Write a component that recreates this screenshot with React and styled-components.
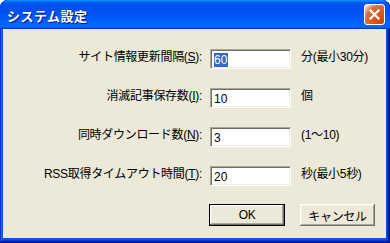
import React from "react";
import styled, { createGlobalStyle } from "styled-components";

const GlobalStyle = createGlobalStyle`
  html, body {
    margin: 0;
    padding: 0;
    background: #ffffff;
  }
  body {
    font-family: "Liberation Sans", "Noto Sans CJK JP", sans-serif;
  }
`;

const Window = styled.div`
  width: 390px;
  height: 243px;
  display: flex;
  flex-direction: column;
  box-sizing: border-box;
  border-radius: 8px 8px 0 0;
  overflow: hidden;
  background: #0055ea;
  box-shadow: inset -1px -1px #00138c, inset 1px 1px #0831d9,
    inset -2px -2px #001ea0, inset 2px 2px #166aee,
    inset -3px -3px #003bda, inset 3px 3px #0855dd;
`;

const TitleBar = styled.div`
  height: 29px;
  flex: none;
  display: flex;
  align-items: center;
  justify-content: space-between;
  padding: 0 5px 0 7px;
  background: linear-gradient(
    180deg,
    #0997ff,
    #0053ee 10%,
    #0050ee 40%,
    #0066ff 86%,
    #0066ff 92%,
    #005bff 95%,
    #003dd7 97%,
    #003dd7
  );
  border-radius: 8px 8px 0 0;
`;

const Title = styled.span`
  color: #ffffff;
  font-family: "Noto Sans CJK JP", sans-serif;
  font-weight: 700;
  font-size: 13px;
  letter-spacing: 0.5px;
  text-shadow: 1px 1px #0f1089;
  margin-top: 1px;
`;

const CloseButton = styled.div`
  width: 19px;
  height: 19px;
  border: 1px solid #ffffff;
  border-radius: 3px;
  display: flex;
  align-items: center;
  justify-content: center;
  background: radial-gradient(
    circle at 90% 90%,
    #cc4600 0%,
    #dc6527 55%,
    #cd7546 70%,
    #ffccb2 90%,
    #ffffff 100%
  );
`;

const Body = styled.div`
  flex: 1;
  margin: 0 4px 5px 3px;
  background: #ece9d8;
`;

const Form = styled.div`
  display: grid;
  grid-template-columns: 199px 81px auto;
  grid-auto-rows: 20px;
  column-gap: 8px;
  row-gap: 19px;
  padding-top: 20px;
`;

const Label = styled.label`
  justify-self: end;
  align-self: start;
  line-height: 16px;
  font-size: 12px;
  color: #000000;
  white-space: nowrap;
  letter-spacing: -0.3px;
`;

const Key = styled.span`
  text-decoration: underline;
`;

const Field = styled.input`
  box-sizing: border-box;
  width: 81px;
  height: 20px;
  margin: 0;
  padding: 2px 3px 0;
  font-family: "Liberation Sans", sans-serif;
  font-size: 12px;
  color: #000000;
  background: #ffffff;
  border: 1px solid;
  border-color: #aca899 #ffffff #ffffff #aca899;
  box-shadow: inset 1px 1px #716f64, inset -1px -1px #f1efe2;
  outline: none;
  &::selection {
    background: #316ac5;
    color: #ffffff;
  }
`;

const Selected = styled.div`
  box-sizing: border-box;
  width: 81px;
  height: 20px;
  padding: 3px 3px 0;
  font-size: 12px;
  line-height: 14px;
  background: #ffffff;
  border: 1px solid;
  border-color: #aca899 #ffffff #ffffff #aca899;
  box-shadow: inset 1px 1px #716f64, inset -1px -1px #f1efe2;
`;

const Highlight = styled.span`
  background: #316ac5;
  color: #ffffff;
  padding-right: 1px;
`;

const Unit = styled.span`
  align-self: start;
  line-height: 16px;
  font-size: 12px;
  color: #000000;
  padding-left: 2px;
  white-space: nowrap;
  letter-spacing: -0.3px;
`;

const ButtonRow = styled.div`
  grid-column: 2 / 4;
  display: flex;
  gap: 15px;
  margin-left: -1px;
  margin-top: -1px;
`;

const Button = styled.button`
  box-sizing: border-box;
  width: ${(p) => p.$width}px;
  height: 22px;
  margin: 0;
  padding: 0;
  font-family: "Liberation Sans", "Noto Sans CJK JP", sans-serif;
  font-size: 12px;
  color: #000000;
  background: #ece9d8;
  border: ${(p) => (p.$primary ? "1px solid #000000" : "none")};
  box-shadow: inset -1px -1px #716f64, inset 1px 1px #ffffff,
    inset -2px -2px #aca899, inset 2px 2px #f1efe2;
  letter-spacing: -0.3px;
`;

const rows = [
  { label: "サイト情報更新間隔", key: "S", value: "60", unit: "分(最小30分)", selected: true },
  { label: "消滅記事保存数", key: "I", value: "10", unit: "個" },
  { label: "同時ダウンロード数", key: "N", value: "3", unit: "(1～10)" },
  { label: "RSS取得タイムアウト時間", key: "T", value: "20", unit: "秒(最小5秒)" },
];

export default function App() {
  return (
    <>
      <GlobalStyle />
      <Window>
        <TitleBar>
          <Title>システム設定</Title>
          <CloseButton>
            <svg width="11" height="11" viewBox="0 0 11 11">
              <path d="M1.5 1.5 L9.5 9.5 M9.5 1.5 L1.5 9.5" stroke="#ffffff" strokeWidth="2.2" strokeLinecap="square" />
            </svg>
          </CloseButton>
        </TitleBar>
        <Body>
          <Form>
            {rows.map((r) => (
              <React.Fragment key={r.key}>
                <Label>
                  {r.label}(<Key>{r.key}</Key>):
                </Label>
                {r.selected ? (
                  <Selected>
                    <Highlight>{r.value}</Highlight>
                  </Selected>
                ) : (
                  <Field defaultValue={r.value} />
                )}
                <Unit>{r.unit}</Unit>
              </React.Fragment>
            ))}
            <ButtonRow>
              <Button $primary $width={76}>OK</Button>
              <Button $width={75}>キャンセル</Button>
            </ButtonRow>
          </Form>
        </Body>
      </Window>
    </>
  );
}
